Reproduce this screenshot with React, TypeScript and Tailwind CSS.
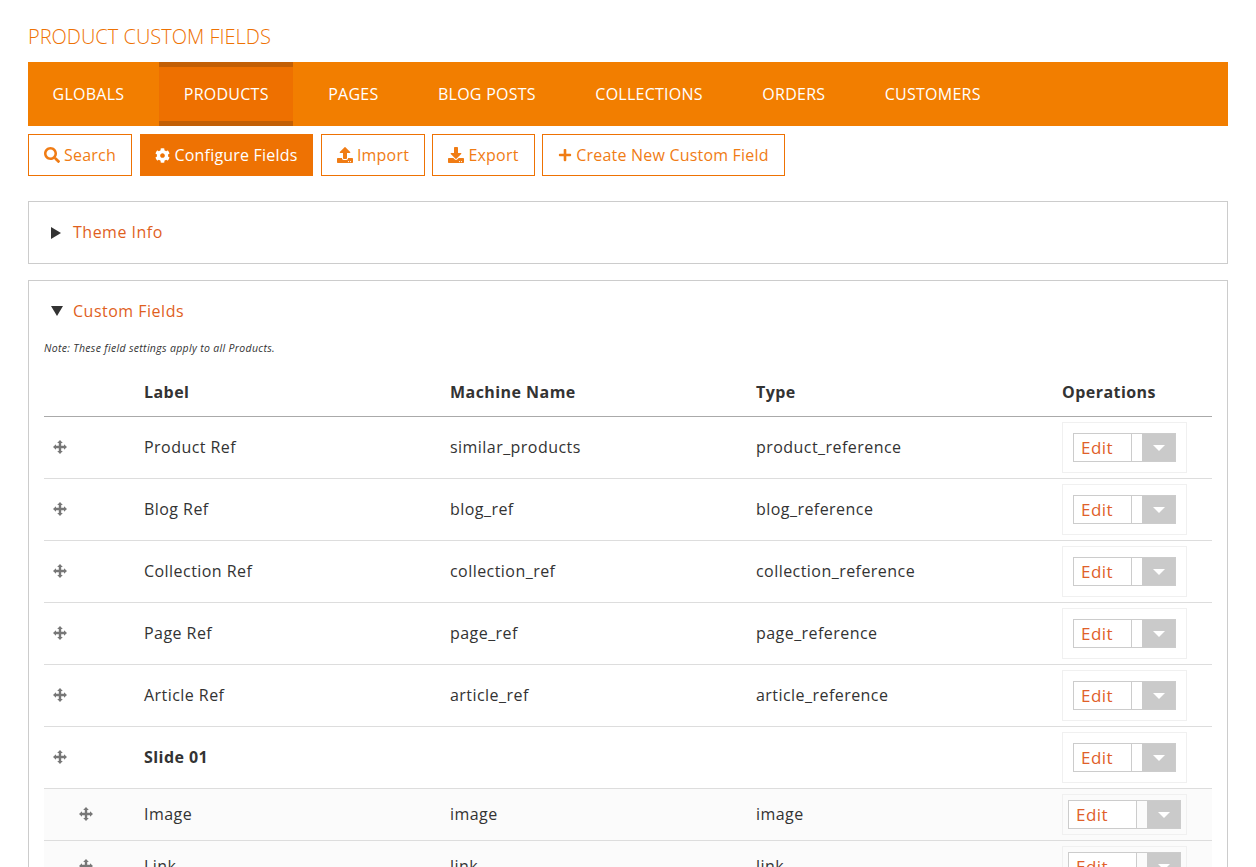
import React from 'react';
import { FaSearch, FaCog, FaUpload, FaDownload, FaPlus } from 'react-icons/fa';

const tabs = ['Globals', 'Products', 'Pages', 'Blog Posts', 'Collections', 'Orders', 'Customers'];

const fields = [
  { label: 'Product Ref', machine: 'similar_products', type: 'product_reference' },
  { label: 'Blog Ref', machine: 'blog_ref', type: 'blog_reference' },
  { label: 'Collection Ref', machine: 'collection_ref', type: 'collection_reference' },
  { label: 'Page Ref', machine: 'page_ref', type: 'page_reference' },
  { label: 'Article Ref', machine: 'article_ref', type: 'article_reference' },
  { label: 'Slide 01', machine: '', type: '', group: true },
  { label: 'Image', machine: 'image', type: 'image', child: true },
  { label: 'Link', machine: 'link', type: 'link', child: true },
];

function DragHandle() {
  return (
    <svg viewBox="0 0 14 14" className="w-[14px] h-[14px] text-[#777]" fill="currentColor">
      <path d="M7 0l2.8 3H8.2v2.8H11V4.2L14 7l-3 2.8V8.2H8.2V11h1.6L7 14l-2.8-3h1.6V8.2H3v1.6L0 7l3-2.8v1.6h2.8V3H4.2z" />
    </svg>
  );
}

function EditButton({ child }: { child?: boolean }) {
  return (
    <div className={`border border-[#f0f0f0] w-[125px] flex justify-center items-center ${child ? 'h-[41px]' : 'h-[51px]'}`}>
      <div className={`flex h-[29px] border border-[#ccc] ${child ? 'w-[113px]' : 'w-[103px]'}`}>
        <span className="flex-1 pl-[7px] text-[17px] leading-[27px] text-[#e0602a] border-r border-[#ccc] bg-white">Edit</span>
        <span className="w-[33px] bg-[#cacaca] flex items-center justify-center ml-[10px]">
          <span className="w-0 h-0 border-l-[6px] border-r-[6px] border-t-[6px] border-l-transparent border-r-transparent border-t-white" />
        </span>
      </div>
    </div>
  );
}

function ActionButton({ icon, text, active, className }: { icon: React.ReactNode; text: string; active?: boolean; className: string }) {
  return (
    <button className={`h-[42px] flex items-center justify-center gap-[4px] border text-[16px] tracking-[0.2px] border-[#ee7203] ${active ? 'bg-[#ee7203] text-white' : 'bg-white text-[#f07c14]'} ${className}`}>
      {icon}
      {text}
    </button>
  );
}

export default function App() {
  return (
    <div className="h-[867px] overflow-hidden bg-white px-[28px] font-['Open_Sans',sans-serif] text-[#333]">
      <h1 className="pt-[23px] h-[62px] text-[20px] leading-[28px] font-light uppercase text-[#ee7203]">Product Custom Fields</h1>

      <nav className="flex h-[64px] bg-[#f27e00]">
        {tabs.map(t => (
          <a
            key={t}
            className={`px-[24.5px] mr-[10.5px] flex items-center text-[16px] tracking-[0.25px] uppercase text-white ${t === 'Products' ? 'bg-[#ee7000] border-y-[5px] border-[#c25f05]' : ''}`}
          >
            {t}
          </a>
        ))}
      </nav>

      <div className="flex mt-[8px]">
        <ActionButton icon={<FaSearch className="w-[16px] h-[16px]" />} text="Search" className="w-[104px] mr-[8px]" />
        <ActionButton icon={<FaCog className="w-[15px] h-[15px]" />} text="Configure Fields" active className="w-[173px] mr-[8px]" />
        <ActionButton icon={<FaUpload className="w-[16px] h-[16px]" />} text="Import" className="w-[104px] mr-[7px]" />
        <ActionButton icon={<FaDownload className="w-[16px] h-[16px]" />} text="Export" className="w-[103px] mr-[7px]" />
        <ActionButton icon={<FaPlus className="w-[14px] h-[14px]" />} text="Create New Custom Field" className="w-[243px]" />
      </div>

      <section className="mt-[25px] h-[63px] border border-[#ccc] flex items-center pl-[22px]">
        <span className="w-0 h-0 border-y-[6px] border-l-[10px] border-y-transparent border-l-[#333]" />
        <span className="ml-[12px] pb-[2px] text-[16px] tracking-[0.5px] text-[#df5f1e]">Theme Info</span>
      </section>

      <section className="mt-[16px] border border-[#ccc] px-[15px]">
        <div className="flex items-center h-[60px] pl-[7px]">
          <span className="w-0 h-0 border-x-[6px] border-t-[10px] border-x-transparent border-t-[#333]" />
          <span className="ml-[10px] text-[16px] tracking-[0.5px] text-[#df5f1e]">Custom Fields</span>
        </div>
        <p className="h-[15px] text-[10.5px] leading-[15px] italic tracking-[0.33px] text-[#333]">Note: These field settings apply to all Products.</p>

        <div className="grid grid-cols-[100px_306px_306px_306px_150px] h-[61px] pt-[24px] border-b border-[#aaa] text-[16px] font-bold tracking-[0.45px]">
          <span />
          <span>Label</span>
          <span>Machine Name</span>
          <span>Type</span>
          <span>Operations</span>
        </div>

        {fields.map(f => (
          <div
            key={f.label}
            className={`grid grid-cols-[100px_306px_306px_306px_150px] items-center border-b border-[#ddd] text-[16px] tracking-[0.45px] ${f.child ? 'h-[52px] bg-[#fbfbfb]' : 'h-[62px]'}`}
          >
            <span className={`pb-[2px] ${f.child ? 'pl-[35px]' : 'pl-[9px]'}`}>
              <DragHandle />
            </span>
            <span className={`pb-[2px] ${f.group ? 'font-bold' : ''}`}>{f.label}</span>
            <span className="pb-[2px]">{f.machine}</span>
            <span className="pb-[2px]">{f.type}</span>
            <EditButton child={f.child} />
          </div>
        ))}
      </section>
    </div>
  );
}
